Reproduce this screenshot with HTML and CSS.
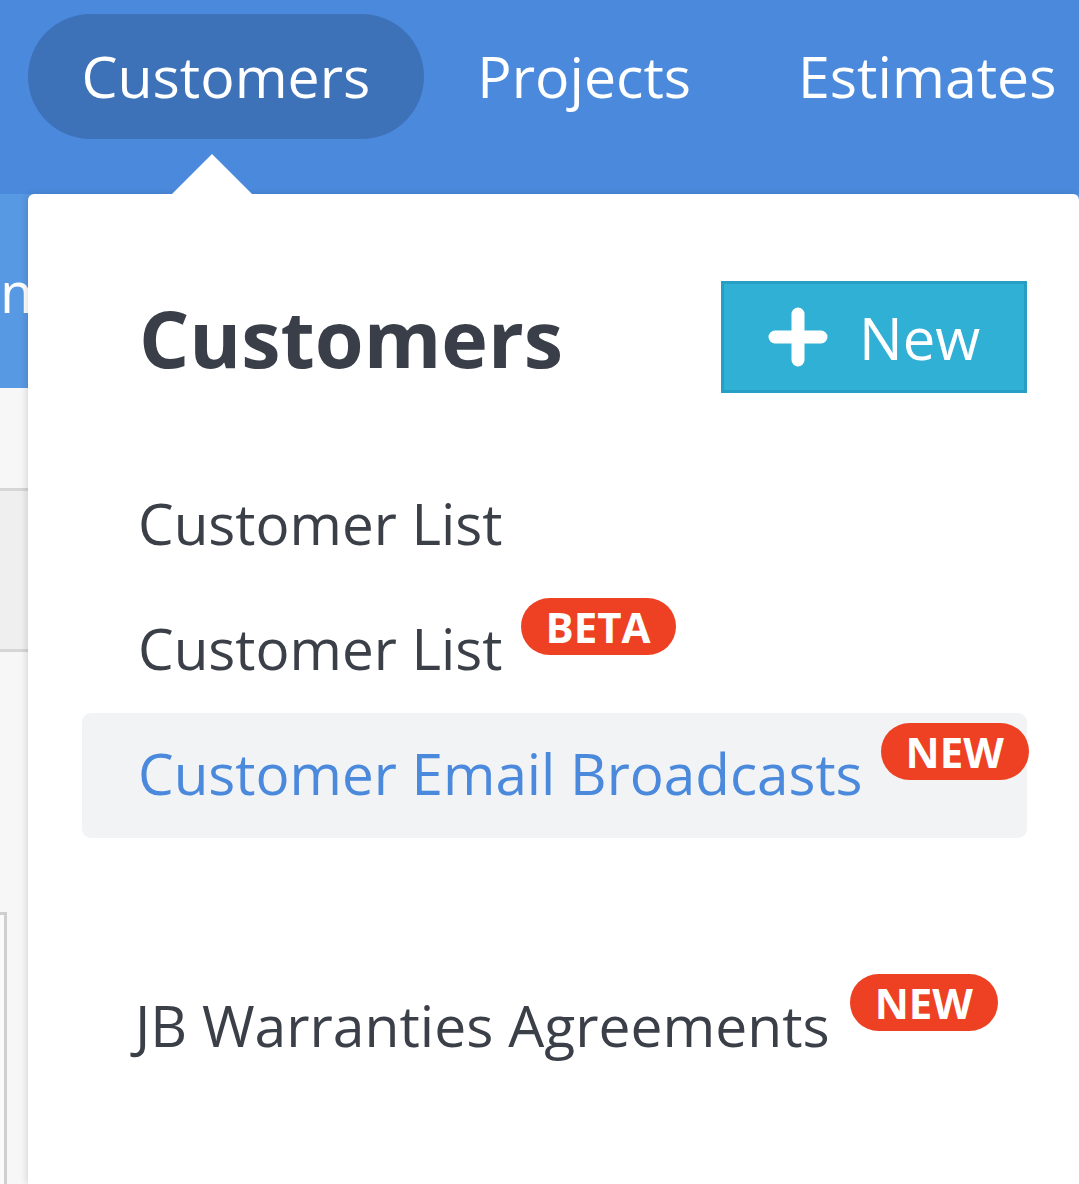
FILE: index.html
```html
<!DOCTYPE html>
<html>
<head>
<meta charset="utf-8">
<link rel="stylesheet" href="styles.css">
</head>
<body>
<header class="topbar">
  <nav class="nav">
    <a class="nav-item active">Customers</a>
    <a class="nav-item">Projects</a>
    <a class="nav-item">Estimates</a>
  </nav>
</header>
<div class="subbar"><span class="subbar-text">m</span></div>
<main class="content">
  <div class="gap-a"></div>
  <div class="row-grey"></div>
  <div class="gap-b"></div>
  <div class="boxed"></div>
</main>

<div class="dropdown">
  <div class="dd-head">
    <h1 class="dd-title">Customers</h1>
    <button class="btn-new">
      <svg class="plus" viewBox="0 0 60 60" width="60" height="60"><path d="M30 7 V53 M7 30 H53" stroke="#fff" stroke-width="13" stroke-linecap="round" fill="none"/></svg>
      <span>New</span>
    </button>
  </div>
  <ul class="dd-list">
    <li class="dd-item"><span class="dd-text">Customer List</span></li>
    <li class="dd-item"><span class="dd-text">Customer List</span><span class="badge">BETA</span></li>
    <li class="dd-item hl"><span class="dd-text">Customer Email Broadcasts</span><span class="badge">NEW</span></li>
    <li class="dd-spacer"></li>
    <li class="dd-item jb"><span class="dd-text">JB Warranties Agreements</span><span class="badge">NEW</span></li>
  </ul>
</div>
</body>
</html>
```

FILE: styles.css
```css
html, body {
  margin: 0;
  padding: 0;
}
body {
  width: 1079px;
  height: 1184px;
  overflow: hidden;
  position: relative;
  background: #f7f7f7;
  font-family: "Open Sans", "Noto Sans", sans-serif;
}
.topbar {
  height: 194px;
  background: #4a89dc;
  box-sizing: border-box;
  padding: 14px 0 0 28px;
}
.nav {
  display: flex;
  gap: 0;
}
.nav-item {
  display: block;
  height: 125px;
  line-height: 125px;
  padding: 0 53.5px;
  border-radius: 63px;
  color: #fff;
  font-size: 57.2px;
  white-space: nowrap;
}
.nav-item.active {
  background: #3e72b8;
}
.subbar {
  height: 194px;
  background: #5899e3;
  color: #fff;
  font-size: 56px;
  line-height: 194px;
  white-space: nowrap;
}
.subbar-text {
  margin-left: 0;
}
.content {
  display: flex;
  flex-direction: column;
}
.gap-a {
  height: 100px;
}
.row-grey {
  height: 158px;
  background: #efefef;
  border-top: 3px solid #d6d6d6;
  border-bottom: 3px solid #d6d6d6;
}
.gap-b {
  height: 260px;
}
.boxed {
  height: 400px;
  width: 4px;
  border: 3px solid #cfcfcf;
  border-left: none;
  background: #fafafa;
}
.dropdown {
  position: absolute;
  left: 28px;
  top: 194px;
  width: 1051px;
  height: 990px;
  background: #fff;
  border-radius: 6px 6px 0 0;
  box-shadow: -2px 0 6px rgba(0,0,0,0.12);
  box-sizing: border-box;
  padding: 87px 52px 0 54px;
}
.dropdown::before {
  content: "";
  position: absolute;
  left: 144px;
  top: -40px;
  width: 0;
  height: 0;
  border-left: 40px solid transparent;
  border-right: 40px solid transparent;
  border-bottom: 40px solid #fff;
}
.dd-head {
  display: flex;
  justify-content: space-between;
  align-items: center;
  height: 112px;
}
.dd-title {
  margin: 0 0 0 57px;
  font-size: 79px;
  font-weight: 700;
  color: #393e48;
  line-height: 1;
}
.btn-new {
  width: 306px;
  height: 112px;
  box-sizing: border-box;
  background: #31b0d6;
  border: 3px solid #279fc4;
  color: #fff;
  font-family: inherit;
  font-size: 58px;
  display: flex;
  align-items: center;
  padding: 0 0 0 44px;
  gap: 31px;
}
.plus {
  display: block;
}
.dd-list {
  list-style: none;
  margin: 70px 0 0 0;
  padding: 0;
}
.dd-item {
  height: 125px;
  display: flex;
  align-items: flex-start;
  padding-left: 56px;
  border-radius: 9px;
}
.dd-text {
  font-size: 56.6px;
  line-height: 122px;
  color: #3b3f48;
  white-space: nowrap;
}
.hl {
  background: #f2f3f5;
}
.hl .dd-text {
  color: #4a89dc;
}
.dd-spacer {
  height: 126px;
}
.jb {
  padding-left: 53px;
}
.jb .dd-text {
  font-size: 57px;
}
.jb .badge {
  margin-left: 20px;
}
.badge {
  margin: 10px 0 0 18px;
  height: 57px;
  line-height: 57px;
  padding: 0 25px;
  border-radius: 29px;
  background: #ee4124;
  color: #fff;
  font-size: 42px;
  font-weight: 700;
}
```
